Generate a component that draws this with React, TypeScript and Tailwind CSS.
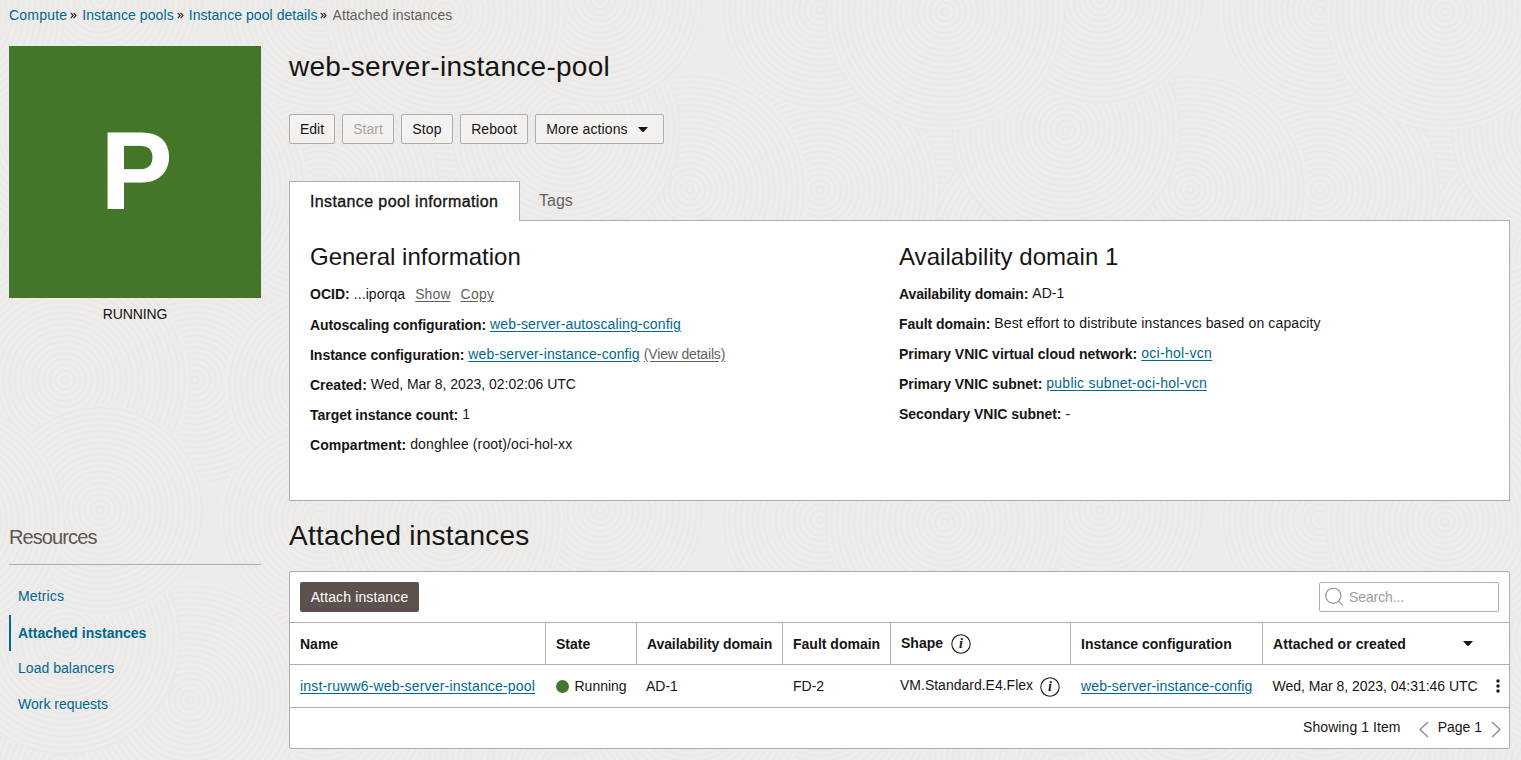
import type { ReactNode } from "react";

const TILE_W = 500;
const TILE_H = 510;

const swirls: [number, number, number][] = [
  [440, 250, 150], [60, 260, 140], [250, 300, 150], [440, 380, 130], [320, 190, 120], [190, 190, 118],
  [195, 380, 105], [65, 380, 125], [320, 385, 95], [66, 130, 115], [100, 0, 105], [320, 10, 100], [445, 12, 120],
];

const tiles = [-1, 0, 1].flatMap((row) => [-1, 0, 1, 2, 3].map((col) => [col * TILE_W, row * TILE_H]));

function Backdrop() {
  return (
    <svg className="absolute inset-0 -z-10" width="1521" height="760" aria-hidden="true">
      <defs>
        <radialGradient id="rings" gradientUnits="userSpaceOnUse" cx="0" cy="0" r="5.8" spreadMethod="repeat">
          <stop offset="0" stopColor="#eeedeb" />
          <stop offset="0.3" stopColor="#edecea" />
          <stop offset="0.65" stopColor="#e9e8e6" />
          <stop offset="1" stopColor="#eeedeb" />
        </radialGradient>
      </defs>
      <rect width="1521" height="760" fill="#ecebe9" />
      {swirls.map(([x, y, r]) =>
        tiles.map(([dx, dy]) => (
          <g key={`${x},${y},${dx},${dy}`} transform={`translate(${x + dx} ${y + dy})`}>
            <circle r={r} fill="url(#rings)" />
          </g>
        )),
      )}
    </svg>
  );
}

function Link({ children, className = "" }: { children: ReactNode; className?: string }) {
  return (
    <a href="#" className={`text-[#00688c] underline underline-offset-2 ${className}`}>
      {children}
    </a>
  );
}

function Separator() {
  return (
    <svg width="7" height="7" viewBox="0 0 7 7" className="mt-px mr-[5px] ml-[3px]" fill="none" stroke="#2b2927" strokeWidth="1.2">
      <path d="M0.8 0.8 3.2 3.5 0.8 6.2M3.6 0.8 6 3.5 3.6 6.2" />
    </svg>
  );
}

function Button({ children, disabled = false, className }: { children: ReactNode; disabled?: boolean; className: string }) {
  return (
    <button
      className={`flex h-[30px] items-center justify-center rounded-[2px] border border-[#b5aca6] bg-[#f4f2f1] ${disabled ? "text-[#aaa39e]" : "text-[#161513]"} ${className}`}
    >
      {children}
    </button>
  );
}

function Field({ label, children, labelClass = "", valueClass = "" }: { label: string; children: ReactNode; labelClass?: string; valueClass?: string }) {
  return (
    <div className="flex h-[30px] items-center whitespace-nowrap">
      <span className={`mr-1 font-bold ${labelClass}`}>{label}</span>
      <span className={valueClass}>{children}</span>
    </div>
  );
}

function Info({ className = "" }: { className?: string }) {
  return (
    <svg width="20" height="20" viewBox="0 0 20 20" className={className}>
      <circle cx="10" cy="10" r="9.2" strokeWidth="1.1" fill="none" stroke="#1b1a18" />
      <text x="10" y="14.4" textAnchor="middle" fill="#1b1a18" className="font-['Liberation_Serif',serif] text-[14px] font-bold italic">i</text>
    </svg>
  );
}

function Caret() {
  return (
    <svg width="10" height="5" viewBox="0 0 10 5">
      <path d="M0 0h10L6 4.5Q5 5.3 4 4.5Z" fill="#161513" />
    </svg>
  );
}

const grid = "grid grid-cols-[256px_91px_146px_108px_180px_192px_1fr]";
const head = "flex items-center border-r border-[#b5aca6] pl-2.5 font-bold whitespace-nowrap";
const cell = "flex items-center pl-2.5 whitespace-nowrap";

export default function App() {
  return (
    <div className="relative isolate h-[760px] w-[1521px] overflow-hidden font-['Liberation_Sans',Arial,sans-serif] text-[14px] leading-5 text-[#161513]">
      <Backdrop />
      <nav className="flex h-[31px] items-center pb-[2px] pl-[9px] tracking-[0.09px] text-[#00688c]">
        <a href="#" className="tracking-[0.2px]">Compute</a>
        <Separator />
        <a href="#">Instance pools</a>
        <Separator />
        <a href="#" className="tracking-[0.05px]">Instance pool details</a>
        <Separator />
        <span className="text-[#66605c]">Attached instances</span>
      </nav>

      <div className="flex">
        <aside className="ml-[9px] w-[252px] pt-[15px]">
          <div className="flex h-[252px] items-center justify-center bg-[#437629]">
            <span className="scale-x-[0.97] pb-[2px] pl-[3px] text-[110px] leading-none font-bold text-white [-webkit-text-stroke:1px_white]">P</span>
          </div>
          <div className="mt-1.5 text-center tracking-[-0.1px]">RUNNING</div>
          <h2 className="mt-[200px] h-[41px] border-b border-[#b5aca6] text-[20px] leading-[26px] font-light tracking-[-0.9px] text-[#5a5653]">
            Resources
          </h2>
          <ul className="mt-[14px] text-[#00688c]">
            <li className="flex h-9 items-center pb-[2px] pl-[9px] tracking-[0.15px]">Metrics</li>
            <li className="flex h-9 items-center border-l-2 border-[#00688c] pl-[7px] font-bold">Attached instances</li>
            <li className="flex h-9 items-center pb-[2px] pl-[9px] tracking-[0.03px]">Load balancers</li>
            <li className="flex h-9 items-center pb-[2px] pl-[9px]">Work requests</li>
          </ul>
        </aside>

        <main className="ml-7 w-[1221px]">
          <h1 className="pt-[18px] text-[28px] leading-9 tracking-[0.28px]">web-server-instance-pool</h1>
          <div className="mt-[29px] flex">
            <Button className="mr-[7px] w-[46px]">Edit</Button>
            <Button className="mr-[7px] w-[52px]" disabled>Start</Button>
            <Button className="mr-[7px] w-[52px] tracking-[0.2px]">Stop</Button>
            <Button className="mr-[7px] w-[68px] tracking-[0.1px]">Reboot</Button>
            <Button className="w-[129px] gap-[10px] pr-[5px] tracking-[0.1px]">More actions <Caret /></Button>
          </div>

          <div className="mt-[37px] flex h-10 text-[16px]">
            <div className="z-10 -mb-px flex h-10 w-[231px] items-center border border-b-0 border-[#b5aca6] bg-white pl-5 font-medium tracking-[0.38px] [-webkit-text-stroke:0.35px_#161513]">
              Instance pool information
            </div>
            <div className="flex items-center pl-[19px] text-[#66605c]">Tags</div>
          </div>
          <section className="-mt-px flex h-[281px] border border-[#b5aca6] bg-white pt-5 pl-5">
            <div className="w-[589px]">
              <h2 className="h-[38px] text-[24px] leading-8">General information</h2>
              <Field label="OCID:">
                <span className="tracking-[0.1px]">...iporqa</span>
                <Link className="ml-2.5 text-[#66605c]! tracking-[0.1px]">Show</Link>
                <Link className="ml-2.5 text-[#66605c]! tracking-[0.2px]">Copy</Link>
              </Field>
              <Field label="Autoscaling configuration:" labelClass="pt-[2px] tracking-[-0.08px]"><Link className="tracking-[0.14px]">web-server-autoscaling-config</Link></Field>
              <Field label="Instance configuration:" labelClass="pt-[2px] tracking-[-0.02px]">
                <Link className="tracking-[0.13px]">web-server-instance-config</Link>
                <Link className="ml-1 text-[#66605c]! tracking-[-0.17px]">(View details)</Link>
              </Field>
              <Field label="Created:" labelClass="pt-[2px]" valueClass="tracking-[-0.03px]">Wed, Mar 8, 2023, 02:02:06 UTC</Field>
              <Field label="Target instance count:" labelClass="pt-[2px] tracking-[-0.04px]">1</Field>
              <Field label="Compartment:" labelClass="pt-[2px] tracking-[0.04px]" valueClass="tracking-[0.13px]">donghlee (root)/oci-hol-xx</Field>
            </div>
            <div>
              <h2 className="h-[38px] text-[24px] leading-8 tracking-[0.05px]">Availability domain 1</h2>
              <Field label="Availability domain:" labelClass="tracking-[-0.12px]" valueClass="pb-[2px]">AD-1</Field>
              <Field label="Fault domain:" labelClass="tracking-[-0.04px]" valueClass="pb-[2px] tracking-[0.13px]">Best effort to distribute instances based on capacity</Field>
              <Field label="Primary VNIC virtual cloud network:" labelClass="tracking-[-0.02px]" valueClass="pb-[2px]"><Link className="tracking-[0.3px]">oci-hol-vcn</Link></Field>
              <Field label="Primary VNIC subnet:" labelClass="tracking-[-0.03px]" valueClass="pb-[2px]"><Link className="tracking-[0.23px]">public subnet-oci-hol-vcn</Link></Field>
              <Field label="Secondary VNIC subnet:" labelClass="tracking-[-0.04px]">-</Field>
            </div>
          </section>

          <h1 className="mt-[17px] text-[28px] leading-9 tracking-[0.22px]">Attached instances</h1>
          <section className="mt-[17px] h-[178px] rounded-[2px] border border-[#b5aca6] bg-white">
            <div className="flex h-[50px] items-center justify-between px-2.5">
              <button className="h-[30px] w-[119px] rounded-[2px] bg-[#5b524d] tracking-[0.13px] text-white">Attach instance</button>
              <div className="flex h-[30px] w-[180px] items-center rounded-[2px] border border-[#b5aca6] pl-[5px] tracking-[-0.1px] text-[#a39b96]">
                <svg width="19" height="19" viewBox="0 0 19 19" className="mr-[5px] mb-px" fill="none" stroke="#958c87" strokeWidth="1.1">
                  <circle cx="8.3" cy="8.8" r="7.6" />
                  <path d="m13.6 14.1 4.2 4.2" />
                </svg>
                Search...
              </div>
            </div>
            <div className={`${grid} h-[43px] border-y border-[#b5aca6]`}>
              <div className={head}>Name</div>
              <div className={head}>State</div>
              <div className={`${head} tracking-[-0.1px]`}>Availability domain</div>
              <div className={head}>Fault domain</div>
              <div className={head}><span className="pb-0.5">Shape</span><Info className="ml-2" /></div>
              <div className={`${head} tracking-[0.03px]`}>Instance configuration</div>
              <div className="flex items-center justify-between pr-[36px] pl-2.5 font-bold tracking-[0.08px]">Attached or created <Caret /></div>
            </div>
            <div className={`${grid} h-[43px] border-b border-[#b5aca6]`}>
              <div className={cell}><Link className="tracking-[0.18px]">inst-ruww6-web-server-instance-pool</Link></div>
              <div className={cell}><span className="mr-1.5 -ml-[0.5px] size-[13px] rounded-full bg-[#437629]" />Running</div>
              <div className={`${cell} -ml-px`}>AD-1</div>
              <div className={cell}>FD-2</div>
              <div className={`${cell} -ml-px`}><span className="pb-0.5">VM.Standard.E4.Flex</span><Info className="mt-[2px] ml-[7px]" /></div>
              <div className={cell}><Link className="tracking-[0.13px]">web-server-instance-config</Link></div>
              <div className="flex items-center justify-between pr-[9px] pl-[9.5px] tracking-[-0.03px]">
                Wed, Mar 8, 2023, 04:31:46 UTC
                <svg width="4" height="14" viewBox="0 0 4 14" fill="#161513">
                  <circle cx="2" cy="2" r="1.7" />
                  <circle cx="2" cy="7" r="1.7" />
                  <circle cx="2" cy="12" r="1.7" />
                </svg>
              </div>
            </div>
            <div className="flex h-[40px] items-center justify-end pr-[8px]">
              <span className="mr-[18px] pb-[2px] tracking-[0.08px]">Showing 1 Item</span>
              <svg width="10" height="17" viewBox="0 0 10 17" className="mt-[3px] mr-[9px]" fill="none" stroke="#958c87" strokeWidth="1.5"><path d="M9 1 1 8.5 9 16" /></svg>
              <span className="pb-[2px]">Page 1</span>
              <svg width="10" height="17" viewBox="0 0 10 17" className="mt-[3px] ml-[9px]" fill="none" stroke="#958c87" strokeWidth="1.5"><path d="M1 1 9 8.5 1 16" /></svg>
            </div>
          </section>
        </main>
      </div>
    </div>
  );
}
